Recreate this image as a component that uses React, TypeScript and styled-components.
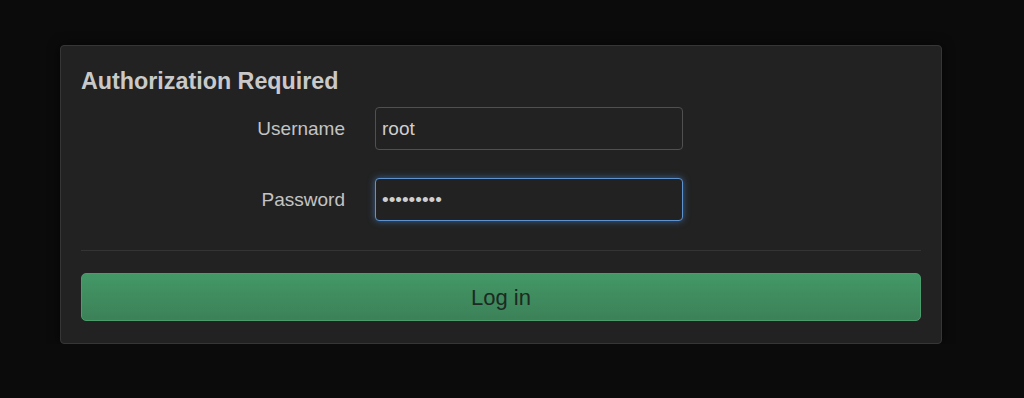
import React, { useState } from 'react';
import styled, { createGlobalStyle } from 'styled-components';

const GlobalStyle = createGlobalStyle`
  html, body {
    margin: 0;
    padding: 0;
    background: #0b0b0b;
    font-family: "Liberation Sans", Arial, sans-serif;
  }
`;

const App: React.FC = () => {
  const [username, setUsername] = useState('root');
  const [password, setPassword] = useState('secret123');

  return (
    <Page>
      <GlobalStyle />
      <Panel>
        <Title>Authorization Required</Title>
        <Fields>
          <Label htmlFor="username">Username</Label>
          <Input
            id="username"
            type="text"
            value={username}
            onChange={(e) => setUsername(e.target.value)}
          />
          <Label htmlFor="password">Password</Label>
          <Input
            id="password"
            type="password"
            value={password}
            focused
            autoFocus
            onChange={(e) => setPassword(e.target.value)}
          />
        </Fields>
        <Divider />
        <LoginButton>Log in</LoginButton>
      </Panel>
    </Page>
  );
};

export default App;

const Page = styled.div`
  padding: 45px 0 0 60px;
`;

const Panel = styled.div`
  width: 840px;
  padding: 23px 20px 22px 20px;
  background: #222222;
  border: 1px solid #363636;
  border-radius: 4px;
  box-shadow: 0 0 12px rgba(0, 0, 0, 0.6);
`;

const Title = styled.h3`
  margin: 0 0 13px 0;
  font-size: 23.3px;
  line-height: 25px;
  font-weight: bold;
  color: #c9c9c9;
`;

const Fields = styled.div`
  display: grid;
  grid-template-columns: 264px 308px;
  column-gap: 30px;
  row-gap: 28px;
  align-items: center;
`;

const Label = styled.label`
  text-align: right;
  font-size: 19px;
  color: #c4c4c4;
`;

const Input = styled.input<{ focused?: boolean }>`
  box-sizing: border-box;
  width: 308px;
  height: 43px;
  padding: 0 6px;
  font-family: "Liberation Sans", Arial, sans-serif;
  font-size: 19px;
  color: #cfcfcf;
  background: #222222;
  border: 1px solid ${(p) => (p.focused ? '#5f93cf' : '#505050')};
  border-radius: 4px;
  outline: none;
  caret-color: #d0d0d0;
  box-shadow: ${(p) =>
    p.focused ? '0 0 7px rgba(82, 150, 230, 0.55)' : 'none'};
`;

const Divider = styled.hr`
  margin: 29px 0 22px 0;
  border: none;
  border-top: 1px solid #343434;
`;

const LoginButton = styled.button`
  display: block;
  width: 100%;
  height: 48px;
  padding-top: 3px;
  font-family: "Liberation Sans", Arial, sans-serif;
  font-size: 22px;
  color: #1c2a21;
  background: linear-gradient(#439866, #3c8158);
  border: 1px solid #4a9e6b;
  border-radius: 5px;
  cursor: pointer;
`;
